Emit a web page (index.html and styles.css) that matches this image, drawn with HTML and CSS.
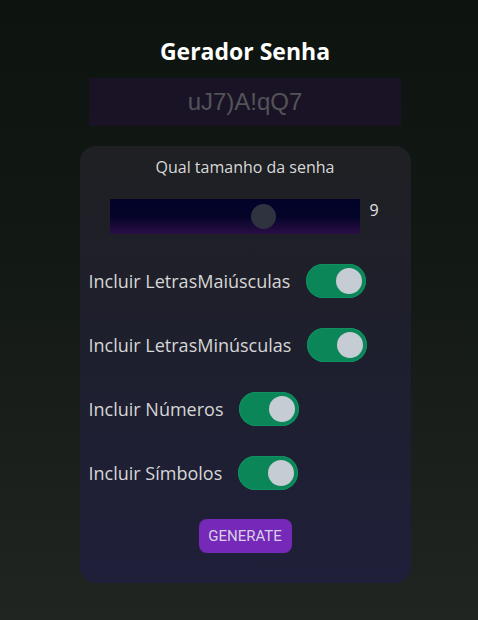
FILE: index.html
```html
<!DOCTYPE html>
<html lang="pt-BR">
<head>
<meta charset="utf-8">
<title>Gerador Senha</title>
<link rel="stylesheet" href="styles.css">
</head>
<body>
<main class="app">
  <h1 class="title">Gerador Senha</h1>
  <div class="password">uJ7)A!qQ7</div>
  <section class="card">
    <p class="question">Qual tamanho da senha</p>
    <div class="length-row">
      <div class="slider"><span class="thumb"></span></div>
      <span class="length-value">9</span>
    </div>
    <div class="option"><span class="label">Incluir LetrasMaiúsculas</span><span class="toggle"><span class="knob"></span></span></div>
    <div class="option"><span class="label">Incluir LetrasMinúsculas</span><span class="toggle"><span class="knob"></span></span></div>
    <div class="option"><span class="label">Incluir Números</span><span class="toggle"><span class="knob"></span></span></div>
    <div class="option"><span class="label">Incluir Símbolos</span><span class="toggle"><span class="knob"></span></span></div>
    <div class="actions"><button class="generate">GENERATE</button></div>
  </section>
</main>
</body>
</html>
```
FILE: styles.css
```css
html, body {
  margin: 0;
  padding: 0;
  height: 100%;
}
body {
  background: linear-gradient(180deg, #0d130f 0%, #121813 40%, #202521 100%);
  font-family: "Open Sans", "Noto Sans", sans-serif;
  color: #dcdcdc;
}
.app {
  display: flex;
  flex-direction: column;
  align-items: center;
  padding: 36px 0 0 12px;
}
.title {
  margin: 0;
  font-size: 23px;
  font-weight: 700;
  color: #ffffff;
  line-height: 31px;
}
.password {
  margin-top: 11px;
  width: 312px;
  height: 48px;
  background: #1a1326;
  color: #535358;
  font-family: "Liberation Sans", Arial, sans-serif;
  font-size: 24px;
  display: flex;
  align-items: center;
  justify-content: center;
}
.card {
  margin-top: 20px;
  width: 331px;
  height: 437px;
  box-sizing: border-box;
  border-radius: 16px;
  background: linear-gradient(180deg, #1f2023 0%, #1e1f2e 50%, #1f1f3a 100%);
  padding: 9px 0 0 9px;
  display: flex;
  flex-direction: column;
}
.question {
  margin: 0;
  padding-right: 9px;
  text-align: center;
  font-size: 16px;
  line-height: 24px;
  color: #d8d8d8;
}
.length-row {
  margin-top: 20px;
  display: flex;
  align-items: center;
  padding-left: 21px;
  gap: 10px;
}
.slider {
  position: relative;
  width: 250px;
  height: 35px;
  background: linear-gradient(180deg, #03032a 0%, #040328 50%, #2a0f45 100%);
}
.thumb {
  position: absolute;
  left: 141px;
  top: 5px;
  width: 25px;
  height: 25px;
  border-radius: 50%;
  background: #2e333f;
}
.length-value {
  font-size: 16px;
  color: #e0e0e0;
  margin-top: -13px;
}
.option {
  display: flex;
  align-items: center;
  height: 34px;
  margin-top: 30px;
  gap: 16px;
}
.label {
  font-size: 18px;
  color: #d6d6d6;
}
.toggle {
  position: relative;
  width: 60px;
  height: 34px;
  border-radius: 17px;
  background: #0b8658;
  box-shadow: inset 0 0 0 1px #0e9060;
  flex-shrink: 0;
}
.knob {
  position: absolute;
  right: 4px;
  top: 4px;
  width: 26px;
  height: 26px;
  border-radius: 50%;
  background: #c6ccd3;
}
.actions {
  display: flex;
  justify-content: center;
  padding-right: 9px;
  margin-top: 29px;
}
.generate {
  width: 93px;
  height: 34px;
  border: none;
  border-radius: 8px;
  background: #7629b8;
  color: #d8d0e8;
  font-family: Roboto, "Liberation Sans", sans-serif;
  font-size: 15px;
  padding: 0;
}
```
